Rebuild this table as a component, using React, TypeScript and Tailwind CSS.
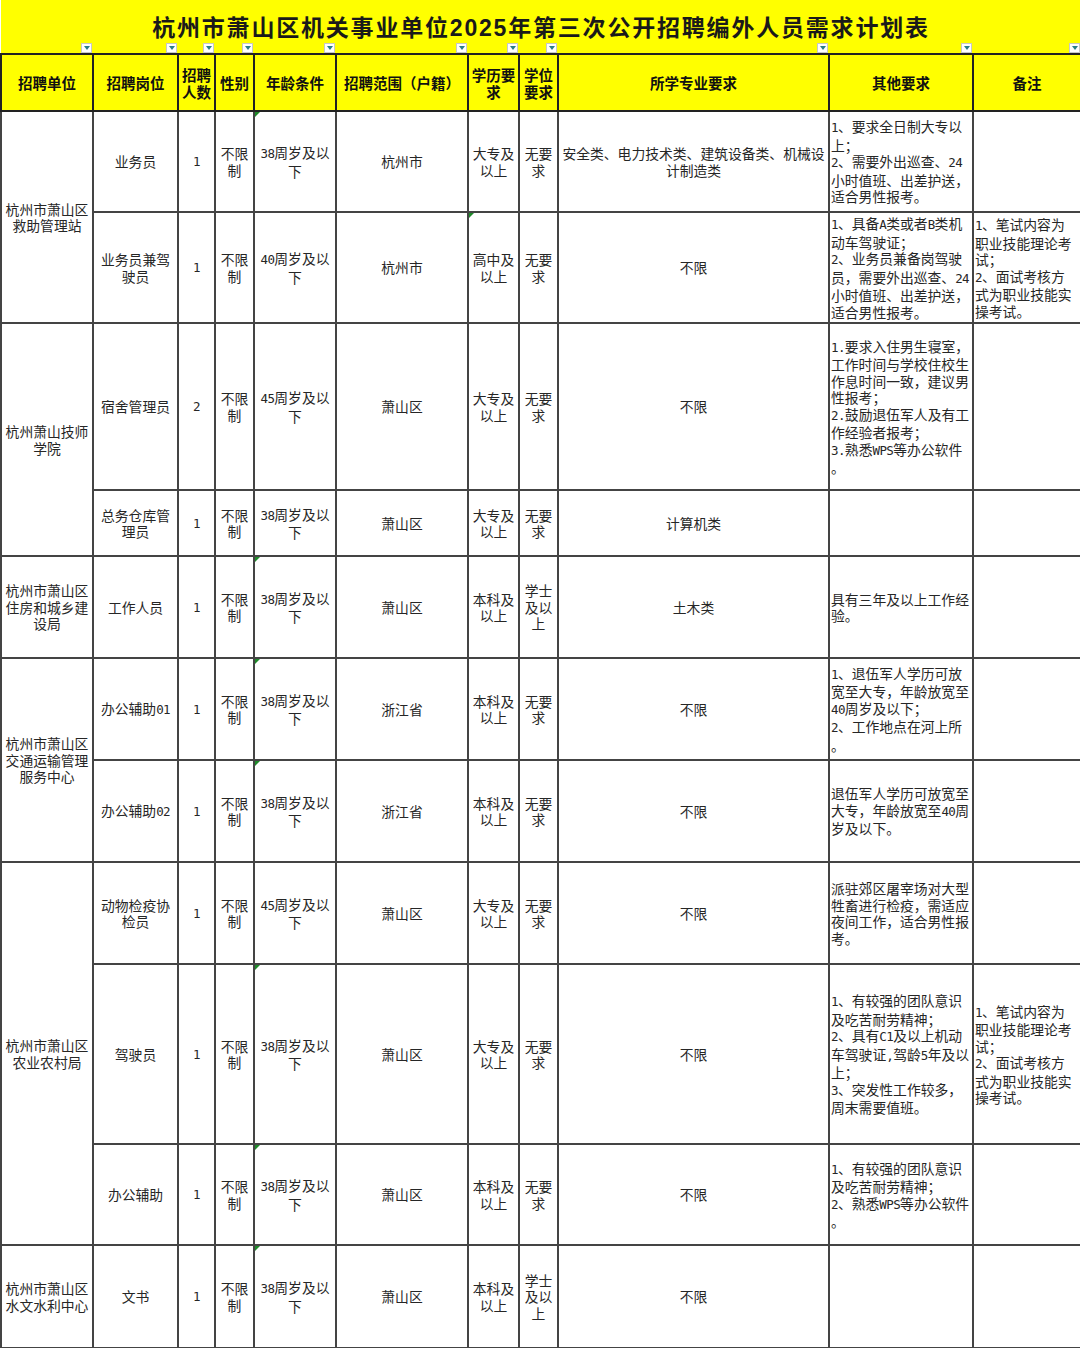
import React from "react";

type Row = {
  h: string;
  unit?: string;
  span?: number;
  pos: string;
  n: string;
  age: string;
  scope: string;
  edu: string;
  deg: string;
  major: string;
  other?: string;
  note?: string;
  gAge?: boolean;
  gEdu?: boolean;
};

const NOTE = "1、笔试内容为|职业技能理论考|试；|2、面试考核方|式为职业技能实|操考试。";

const rows: Row[] = [
  {
    h: "h-[101px]",
    unit: "杭州市萧山区|救助管理站",
    span: 2,
    pos: "业务员",
    n: "1",
    age: "38周岁及以|下",
    scope: "杭州市",
    edu: "大专及|以上",
    deg: "无要|求",
    major: "安全类、电力技术类、建筑设备类、机械设|计制造类",
    other: "1、要求全日制大专以|上；|2、需要外出巡查、24|小时值班、出差护送，|适合男性报考。",
    gAge: true,
  },
  {
    h: "h-[111px]",
    pos: "业务员兼驾|驶员",
    n: "1",
    age: "40周岁及以|下",
    scope: "杭州市",
    edu: "高中及|以上",
    deg: "无要|求",
    major: "不限",
    other: "1、具备A类或者B类机|动车驾驶证；|2、业务员兼备岗驾驶|员，需要外出巡查、24|小时值班、出差护送，|适合男性报考。",
    note: NOTE,
    gEdu: true,
  },
  {
    h: "h-[167px]",
    unit: "杭州萧山技师|学院",
    span: 2,
    pos: "宿舍管理员",
    n: "2",
    age: "45周岁及以|下",
    scope: "萧山区",
    edu: "大专及|以上",
    deg: "无要|求",
    major: "不限",
    other: "1.要求入住男生寝室，|工作时间与学校住校生|作息时间一致，建议男|性报考；|2.鼓励退伍军人及有工|作经验者报考；|3.熟悉WPS等办公软件|。",
  },
  {
    h: "h-[66px]",
    pos: "总务仓库管|理员",
    n: "1",
    age: "38周岁及以|下",
    scope: "萧山区",
    edu: "大专及|以上",
    deg: "无要|求",
    major: "计算机类",
  },
  {
    h: "h-[102px]",
    unit: "杭州市萧山区|住房和城乡建|设局",
    span: 1,
    pos: "工作人员",
    n: "1",
    age: "38周岁及以|下",
    scope: "萧山区",
    edu: "本科及|以上",
    deg: "学士|及以|上",
    major: "土木类",
    other: "具有三年及以上工作经|验。",
    gAge: true,
  },
  {
    h: "h-[102px]",
    unit: "杭州市萧山区|交通运输管理|服务中心",
    span: 2,
    pos: "办公辅助01",
    n: "1",
    age: "38周岁及以|下",
    scope: "浙江省",
    edu: "本科及|以上",
    deg: "无要|求",
    major: "不限",
    other: "1、退伍军人学历可放|宽至大专，年龄放宽至|40周岁及以下；|2、工作地点在河上所|。",
    gAge: true,
  },
  {
    h: "h-[102px]",
    pos: "办公辅助02",
    n: "1",
    age: "38周岁及以|下",
    scope: "浙江省",
    edu: "本科及|以上",
    deg: "无要|求",
    major: "不限",
    other: "退伍军人学历可放宽至|大专，年龄放宽至40周|岁及以下。",
    gAge: true,
  },
  {
    h: "h-[102px]",
    unit: "杭州市萧山区|农业农村局",
    span: 3,
    pos: "动物检疫协|检员",
    n: "1",
    age: "45周岁及以|下",
    scope: "萧山区",
    edu: "大专及|以上",
    deg: "无要|求",
    major: "不限",
    other: "派驻郊区屠宰场对大型|牲畜进行检疫，需适应|夜间工作，适合男性报|考。",
  },
  {
    h: "h-[180px]",
    pos: "驾驶员",
    n: "1",
    age: "38周岁及以|下",
    scope: "萧山区",
    edu: "大专及|以上",
    deg: "无要|求",
    major: "不限",
    other: "1、有较强的团队意识|及吃苦耐劳精神；|2、具有C1及以上机动|车驾驶证,驾龄5年及以|上；|3、突发性工作较多，|周末需要值班。",
    note: NOTE,
    gAge: true,
  },
  {
    h: "h-[101px]",
    pos: "办公辅助",
    n: "1",
    age: "38周岁及以|下",
    scope: "萧山区",
    edu: "本科及|以上",
    deg: "无要|求",
    major: "不限",
    other: "1、有较强的团队意识|及吃苦耐劳精神；|2、熟悉WPS等办公软件|。",
    gAge: true,
  },
  {
    h: "h-[103px]",
    unit: "杭州市萧山区|水文水利中心",
    span: 1,
    pos: "文书",
    n: "1",
    age: "38周岁及以|下",
    scope: "萧山区",
    edu: "本科及|以上",
    deg: "学士|及以|上",
    major: "不限",
    gAge: true,
  },
];

function T({ s }: { s: string }) {
  const parts = s.split(/([\x21-\x7e]+)/);
  return (
    <>
      {parts.map((p, i) =>
        /^[\x21-\x7e]+$/.test(p) ? (
          <span
            key={i}
            className="font-['DejaVu_Sans_Mono',monospace] text-[12.5px] tracking-[-0.6px]"
          >
            {p}
          </span>
        ) : (
          <React.Fragment key={i}>{p}</React.Fragment>
        )
      )}
    </>
  );
}

function Lines({ t }: { t?: string }) {
  if (!t) return null;
  return (
    <>
      {t.split("|").map((s, i) => (
        <div key={i} className="whitespace-nowrap">
          <T s={s} />
        </div>
      ))}
    </>
  );
}

function Green() {
  return (
    <span className="absolute left-0 top-0 w-0 h-0 border-t-[5px] border-r-[5px] border-t-[#1f8a2a] border-r-transparent" />
  );
}

function Filter() {
  return (
    <span className="flex w-[11px] h-[10px] items-center justify-center bg-white border border-[#c8c8c8]">
      <span className="w-0 h-0 border-l-[3px] border-r-[3px] border-t-[4px] border-l-transparent border-r-transparent border-t-[#2b7f86]" />
    </span>
  );
}

const headers = [
  "招聘单位",
  "招聘岗位",
  "招聘|人数",
  "性别",
  "年龄条件",
  "招聘范围（户籍）",
  "学历要|求",
  "学位|要求",
  "所学专业要求",
  "其他要求",
  "备注",
];

const td =
  "border-2 border-[#444] align-middle text-center px-[1px] text-[13.8px] leading-[16.5px] text-[#262626]";
const tdL =
  "border-2 border-[#444] align-middle text-left pl-[1px] pr-0 text-[13.8px] leading-[16.5px] text-[#262626]";

export default function App() {
  return (
    <div className="w-[1080px] h-[1348px] overflow-hidden bg-white font-['Noto_Sans_CJK_SC',sans-serif]">
      <table className="w-[1080px] table-fixed border-collapse">
        <colgroup>
          <col className="w-[92px]" />
          <col className="w-[85px]" />
          <col className="w-[37px]" />
          <col className="w-[39px]" />
          <col className="w-[82px]" />
          <col className="w-[132px]" />
          <col className="w-[51px]" />
          <col className="w-[39px]" />
          <col className="w-[271px]" />
          <col className="w-[144px]" />
          <col className="w-[108px]" />
        </colgroup>
        <tbody>
          <tr className="h-[43px]">
            <td
              colSpan={11}
              className="bg-[#ffff00] p-0 pt-[10px] align-middle text-center text-[23px] font-bold tracking-[1.8px] leading-[30px] text-[#1a1a1a]"
            >
              杭州市萧山区机关事业单位<span className="font-['Liberation_Sans',sans-serif]">2025</span>年第三次公开招聘编外人员需求计划表
            </td>
          </tr>
          <tr className="h-[11px]">
            {headers.map((_, i) => (
              <td key={i} className="bg-[#ffff00] p-0 align-bottom">
                <div className="flex justify-end pr-[1px]">
                  <Filter />
                </div>
              </td>
            ))}
          </tr>
          <tr className="h-[57px]">
            {headers.map((h, i) => (
              <td
                key={i}
                className="bg-[#ffff00] border-2 border-[#222] align-middle text-center px-[1px] text-[14.5px] leading-[17px] font-bold text-[#111]"
              >
                <Lines t={h} />
              </td>
            ))}
          </tr>
          {rows.map((r, i) => (
            <tr key={i} className={r.h}>
              {r.unit && (
                <td rowSpan={r.span} className={td}>
                  <Lines t={r.unit} />
                </td>
              )}
              <td className={td}>
                <Lines t={r.pos} />
              </td>
              <td className={td}>
                <T s={r.n} />
              </td>
              <td className={td}>
                <Lines t="不限|制" />
              </td>
              <td className={td + " relative"}>
                {r.gAge && <Green />}
                <Lines t={r.age} />
              </td>
              <td className={td}>{r.scope}</td>
              <td className={td + " relative"}>
                {r.gEdu && <Green />}
                <Lines t={r.edu} />
              </td>
              <td className={td}>
                <Lines t={r.deg} />
              </td>
              <td className={td}>
                <Lines t={r.major} />
              </td>
              <td className={tdL}>
                <Lines t={r.other} />
              </td>
              <td className={tdL}>
                <Lines t={r.note} />
              </td>
            </tr>
          ))}
        </tbody>
      </table>
    </div>
  );
}
